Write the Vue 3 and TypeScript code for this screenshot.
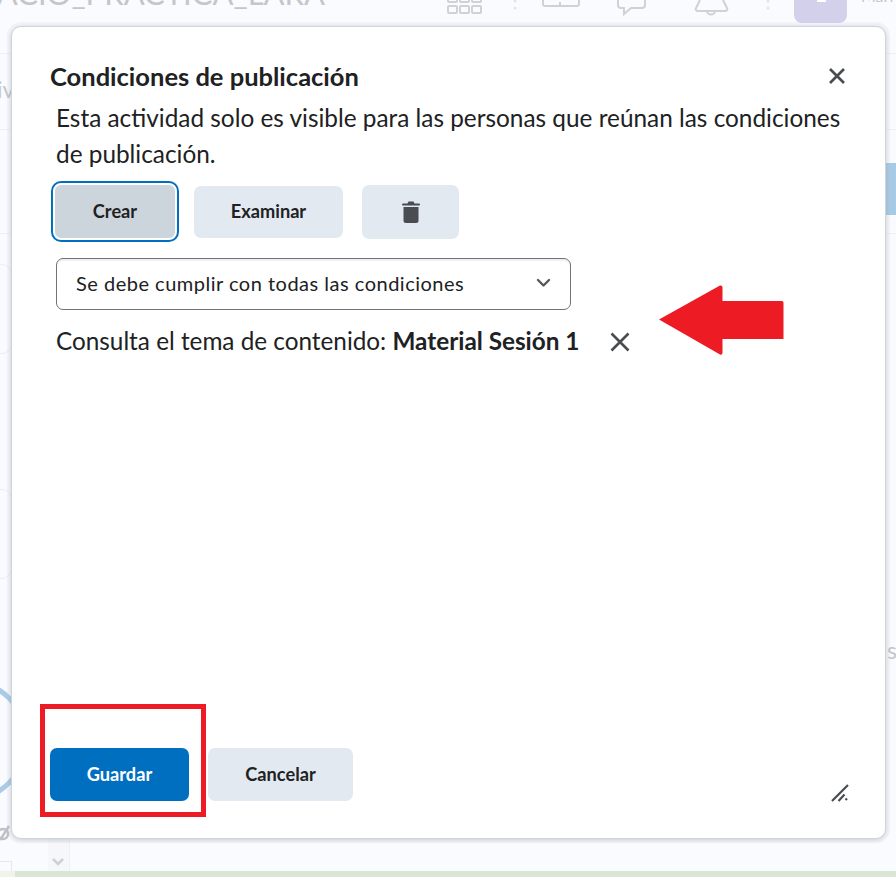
<script setup lang="ts">
const note = 'Esta actividad solo es visible para las personas que reúnan las condiciones de publicación.'
const matchOptions = ['Se debe cumplir con todas las condiciones', 'Se debe cumplir con alguna condición']
</script>

<template>
  <div class="page">
    <!-- dimmed page behind the dialog -->
    <div class="behind" aria-hidden="true">
      <div class="course-title">ACIO_PRACTICA_LARA</div>
      <svg class="nav-icons" width="450" height="27" viewBox="0 0 450 27" fill="none" stroke="#cfd1d6" stroke-width="2">
        <rect x="18" y="-5" width="9" height="7" rx="1" /><rect x="30" y="-5" width="9" height="7" rx="1" /><rect x="42" y="-5" width="9" height="7" rx="1" />
        <rect x="18" y="6" width="9" height="7" rx="1" /><rect x="30" y="6" width="9" height="7" rx="1" /><rect x="42" y="6" width="9" height="7" rx="1" />
        <circle cx="85" cy="1" r="1.500" fill="#e3e4e8" stroke="none" /><circle cx="85" cy="8" r="1.500" fill="#e3e4e8" stroke="none" />
        <path d="M113 -8V4a2 2 0 0 0 2 2h32a2 2 0 0 0 2-2V-8" />
        <path d="M130 6V2" />
        <path d="M188 -4V5a3 3 0 0 0 3 3h3v6l7-6h11a3 3 0 0 0 3-3V-4" />
        <path d="M270 0l-4 8a2 2 0 0 0 2 3h27a2 2 0 0 0 2-3l-4-8" /><path d="M277 11a4 3.500 0 0 0 8 0" />
        <circle cx="338" cy="1" r="1.500" fill="#e3e4e8" stroke="none" /><circle cx="338" cy="8" r="1.500" fill="#e3e4e8" stroke="none" />
      </svg>
      <div class="avatar"><span class="avatar-dot"></span></div>
      <div class="user-name">Mari</div>
      <div class="hline hline-nav"></div>
      <div class="hline hline-top"></div>
      <div class="hline hline-mid"></div>
      <div class="side-text">iv</div>
      <div class="side-card side-card-a"></div>
      <div class="side-card side-card-b"></div>
      <div class="ring"></div>
      <svg class="link-icon" width="12" height="20" viewBox="0 0 12 20" fill="none" stroke="#bfc1c5" stroke-width="2.500">
        <ellipse cx="3" cy="12" rx="5" ry="5" /><path d="M0 18 9 4" />
      </svg>
      <div class="blue-tab"></div>
      <div class="side-s">s</div>
      <div class="scroll-col"></div>
      <div class="corner-box"></div>
      <svg class="down-chevron" width="14" height="9" viewBox="0 0 14 9" fill="none" stroke="#cdd0d4" stroke-width="2.500">
        <path d="M2 2l5 5 5-5" />
      </svg>
      <div class="green-strip"><span class="green-left"></span><span class="green-main"></span></div>
    </div>

    <section class="dialog" role="dialog">
      <header class="dialog-head">
        <h1 class="dialog-title">Condiciones de publicación</h1>
        <button class="icon-btn close" type="button" aria-label="Cerrar">
          <svg width="18" height="18" viewBox="0 0 18 18" fill="none" stroke="#494c50" stroke-width="2.700">
            <path d="M2 2l14 14M16 2 2 16" />
          </svg>
        </button>
      </header>

      <div class="dialog-body">
        <p class="note">{{ note }}</p>

        <div class="toolbar">
          <button class="btn btn-focus" type="button">Crear</button>
          <button class="btn btn-browse" type="button">Examinar</button>
          <button class="btn btn-trash" type="button" aria-label="Eliminar">
            <svg width="18" height="24" viewBox="0 0 18 24" fill="#494c50">
              <path d="M6.500 1.500h5l1 2H17a.8.8 0 0 1 0 2H1a.8.8 0 0 1 0-2h4.500z" />
              <path d="M1.500 7h15v13.500a2.500 2.500 0 0 1-2.500 2.500H4a2.500 2.500 0 0 1-2.500-2.500z" />
            </svg>
          </button>
        </div>

        <div class="select-box">
          <span class="select-label">{{ matchOptions[0] }}</span>
          <svg width="15" height="10" viewBox="0 0 15 10" fill="none" stroke="#55585d" stroke-width="2.400" stroke-linecap="round" stroke-linejoin="round">
            <path d="M2 2l5.500 5.500L13 2" />
          </svg>
        </div>

        <div class="condition">
          <span>Consulta el tema de contenido: <strong>Material Sesión 1</strong></span>
          <button class="icon-btn remove" type="button" aria-label="Quitar">
            <svg width="20" height="20" viewBox="0 0 20 20" fill="none" stroke="#494c50" stroke-width="2.600">
              <path d="M1.500 1.500l17 17M18.500 1.500l-17 17" />
            </svg>
          </button>
        </div>
      </div>

      <footer class="dialog-foot">
        <button class="btn btn-primary" type="button">Guardar</button>
        <button class="btn btn-cancel" type="button">Cancelar</button>
        <svg class="resize" width="18" height="18" viewBox="0 0 18 18" fill="none" stroke="#494c50" stroke-width="2.200">
          <path d="M1 17 17 1M7.500 17 13.500 10.500M14.500 16l1.500-1.500" />
        </svg>
      </footer>

      <!-- annotations added on top of the screenshot -->
      <svg class="arrow" width="126" height="72" viewBox="0 0 126 72" aria-hidden="true">
        <path d="M1 35.500 62 1.500Q64 1 64.500 3V17H124Q125.500 17 125.500 19V55H64.500V69Q64 71.500 62 70.500Z" fill="#ed1c24" />
      </svg>
      <div class="save-mark" aria-hidden="true"></div>
    </section>
  </div>
</template>

<style>
html, body { margin: 0; background: #fafbff; }
</style>

<style scoped>
.page {
  position: relative;
  width: 896px;
  height: 877px;
  overflow: hidden;
  box-sizing: border-box;
  padding: 26px 0 0 11px;
  background: #fafbff;
  font-family: Lato, "Noto Sans", sans-serif;
  color: #202122;
}
.behind { position: absolute; inset: 0; }
.behind > * { position: absolute; }
.course-title { right: 571px; top: -27px; font-size: 31px; line-height: 40px; color: #c4c6ca; white-space: nowrap; }
.nav-icons { left: 430px; top: 0; }
.avatar { left: 794px; top: -10px; width: 53px; height: 33px; border-radius: 8px; background: #d2d0ea; }
.avatar-dot { position: absolute; left: 23px; top: 8px; width: 9px; height: 4px; background: #fff; }
.user-name { left: 861px; top: -14px; font-size: 16px; line-height: 20px; color: #c4c6ca; }
.hline { left: 0; right: 0; height: 1px; background: #eff0f4; }
.hline-nav { top: 53px; }
.hline-top { top: 129px; }
.hline-mid { top: 233px; }
.side-text { left: -3px; top: 75px; font-size: 23px; line-height: 28px; color: #c4c6ca; }
.side-card { left: -20px; width: 30px; border: 1px solid #eceef2; border-radius: 10px; }
.side-card-a { top: 264px; height: 88px; }
.side-card-b { top: 489px; height: 88px; }
.ring { left: -96px; top: 678px; width: 125px; height: 125px; border: 5px solid #a9cbe6; border-radius: 50%; box-sizing: border-box; }
.link-icon { left: 0; top: 822px; }
.blue-tab { left: 880px; top: 163px; width: 16px; height: 52px; background: #a7cbe7; }
.side-s { left: 887px; top: 638px; font-size: 23px; line-height: 24px; color: #c4c6ca; }
.scroll-col { left: 48px; top: 838px; width: 21px; height: 33px; background: #f6f7fa; border-right: 1px solid #eff0f4; }
.corner-box { left: -10px; top: 861px; width: 20px; height: 20px; border: 1px solid #e6e7eb; }
.down-chevron { left: 51px; top: 857px; }
.green-strip { left: 0; right: 0; top: 871px; height: 6px; display: flex; }
.green-left { width: 15px; background: #eff3ea; }
.green-main { flex: 1; background: #dbe5d5; }

.dialog {
  position: relative;
  display: flex;
  flex-direction: column;
  box-sizing: border-box;
  width: 875px;
  height: 813px;
  background: #fff;
  border: 1px solid #cdd5dc;
  border-radius: 10px;
  box-shadow: 0 1px 4px rgba(86, 90, 92, 0.25), 0 0 0 4px rgba(200, 205, 215, 0.14);
}
.dialog-head { display: flex; align-items: center; justify-content: space-between; padding: 34px 39px 0 38px; height: 30px; }
.dialog-title { margin: 0; font-size: 25.500px; line-height: 30px; font-weight: 700; color: #202122; }
.icon-btn { display: flex; padding: 0; border: 0; background: none; }
.dialog-body { flex: 1; padding: 9px 43px 0 44px; }
.note { margin: 0; font-size: 24.370px; line-height: 36px; }
.toolbar { display: flex; align-items: center; margin-top: 9px; }
.btn { box-sizing: border-box; border: 0; border-radius: 7px; padding: 0 0 2px; font-family: inherit; font-size: 18.200px; font-weight: 700; color: #202122; background: #e3e9f1; }
.btn-focus { width: 128px; height: 61px; background: #cdd5dc; border: 4px solid #fff; outline: 2px solid #006fbf; outline-offset: -2px; border-radius: 10px; margin-left: -5px; }
.btn-browse { width: 149px; height: 52px; margin-left: 15px; }
.btn-trash { display: flex; align-items: center; justify-content: center; width: 97px; height: 54px; margin-left: 19px; padding: 0; }
.select-box { display: flex; align-items: center; justify-content: space-between; box-sizing: border-box; width: 515px; height: 52px; margin-top: 16px; padding: 0 19px 2px 19px; border: 1px solid #6e7477; border-radius: 7px; box-shadow: inset 0 2px 0 #eef0f3; font-size: 20px; letter-spacing: 0.5px; }
.condition { display: flex; align-items: center; margin-top: 13px; font-size: 24.300px; line-height: 36px; }
.condition strong { font-weight: 700; }
.remove { margin: 2px 0 0 31px; }
.dialog-foot { position: relative; display: flex; align-items: center; gap: 19px; padding: 0 0 37px 38px; }
.btn-primary { width: 139px; height: 53px; background: #006fbf; color: #fff; }
.btn-cancel { width: 145px; height: 53px; }
.resize { position: absolute; right: 36px; bottom: 36px; }
.arrow { position: absolute; left: 646px; top: 257px; }
.save-mark { position: absolute; left: 28px; top: 677px; width: 166px; height: 113px; box-sizing: border-box; border: 5px solid #ed1c24; }
</style>
